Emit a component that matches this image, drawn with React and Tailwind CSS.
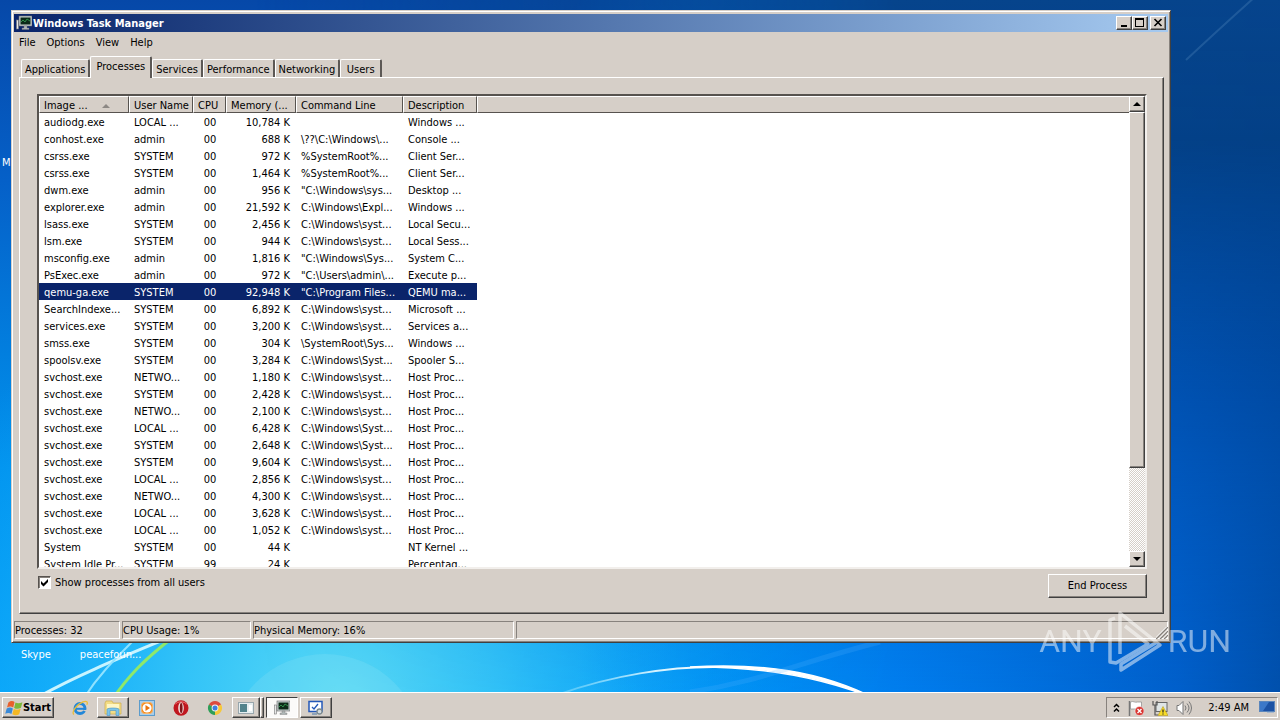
import { useState } from "react";
import clsx from "clsx";

const processes = [
  ["audiodg.exe", "LOCAL ...", "00", "10,784 K", "", "Windows ..."],
  ["conhost.exe", "admin", "00", "688 K", "\\??\\C:\\Windows\\...", "Console ..."],
  ["csrss.exe", "SYSTEM", "00", "972 K", "%SystemRoot%...", "Client Ser..."],
  ["csrss.exe", "SYSTEM", "00", "1,464 K", "%SystemRoot%...", "Client Ser..."],
  ["dwm.exe", "admin", "00", "956 K", '"C:\\Windows\\sys...', "Desktop ..."],
  ["explorer.exe", "admin", "00", "21,592 K", "C:\\Windows\\Expl...", "Windows ..."],
  ["lsass.exe", "SYSTEM", "00", "2,456 K", "C:\\Windows\\syst...", "Local Secu..."],
  ["lsm.exe", "SYSTEM", "00", "944 K", "C:\\Windows\\syst...", "Local Sess..."],
  ["msconfig.exe", "admin", "00", "1,816 K", '"C:\\Windows\\Sys...', "System C..."],
  ["PsExec.exe", "admin", "00", "972 K", '"C:\\Users\\admin\\...', "Execute p..."],
  ["qemu-ga.exe", "SYSTEM", "00", "92,948 K", '"C:\\Program Files...', "QEMU ma..."],
  ["SearchIndexe...", "SYSTEM", "00", "6,892 K", "C:\\Windows\\syst...", "Microsoft ..."],
  ["services.exe", "SYSTEM", "00", "3,200 K", "C:\\Windows\\syst...", "Services a..."],
  ["smss.exe", "SYSTEM", "00", "304 K", "\\SystemRoot\\Sys...", "Windows ..."],
  ["spoolsv.exe", "SYSTEM", "00", "3,284 K", "C:\\Windows\\Syst...", "Spooler S..."],
  ["svchost.exe", "NETWO...", "00", "1,180 K", "C:\\Windows\\syst...", "Host Proc..."],
  ["svchost.exe", "SYSTEM", "00", "2,428 K", "C:\\Windows\\syst...", "Host Proc..."],
  ["svchost.exe", "NETWO...", "00", "2,100 K", "C:\\Windows\\syst...", "Host Proc..."],
  ["svchost.exe", "LOCAL ...", "00", "6,428 K", "C:\\Windows\\Syst...", "Host Proc..."],
  ["svchost.exe", "SYSTEM", "00", "2,648 K", "C:\\Windows\\Syst...", "Host Proc..."],
  ["svchost.exe", "SYSTEM", "00", "9,604 K", "C:\\Windows\\syst...", "Host Proc..."],
  ["svchost.exe", "LOCAL ...", "00", "2,856 K", "C:\\Windows\\syst...", "Host Proc..."],
  ["svchost.exe", "NETWO...", "00", "4,300 K", "C:\\Windows\\syst...", "Host Proc..."],
  ["svchost.exe", "LOCAL ...", "00", "3,628 K", "C:\\Windows\\syst...", "Host Proc..."],
  ["svchost.exe", "LOCAL ...", "00", "1,052 K", "C:\\Windows\\syst...", "Host Proc..."],
  ["System", "SYSTEM", "00", "44 K", "", "NT Kernel ..."],
  ["System Idle Pr...", "SYSTEM", "99", "24 K", "", "Percentag..."],
];

const tabs = ["Applications", "Processes", "Services", "Performance", "Networking", "Users"];

const raised =
  "bg-[#d6cfc8] border border-t-white border-l-white border-r-[#404040] border-b-[#404040] shadow-[inset_-1px_-1px_0_#87827d]";

function Wallpaper() {
  return (
    <svg
      className="absolute inset-0 w-full h-full"
      viewBox="0 0 1280 720"
      preserveAspectRatio="none"
      aria-hidden="true"
    >
      <defs>
        <linearGradient id="sky" x1="0" y1="0" x2="0" y2="1">
          <stop offset="0" stopColor="#0648a8" />
          <stop offset="0.25" stopColor="#0560c8" />
          <stop offset="0.65" stopColor="#0093ee" />
          <stop offset="1" stopColor="#00a4fa" />
        </linearGradient>
        <radialGradient id="glow" gradientUnits="userSpaceOnUse" cx="340" cy="700" r="460">
          <stop offset="0" stopColor="#5cdcf5" />
          <stop offset="0.35" stopColor="#3ac8f8" stopOpacity="0.85" />
          <stop offset="1" stopColor="#10a4fc" stopOpacity="0" />
        </radialGradient>
        <linearGradient id="shade" x1="0" y1="0" x2="1" y2="0">
          <stop offset="0.45" stopColor="#0088f8" stopOpacity="0" />
          <stop offset="0.7" stopColor="#007cf0" stopOpacity="0.9" />
          <stop offset="0.92" stopColor="#0060cc" />
          <stop offset="1" stopColor="#0050ac" />
        </linearGradient>
        <linearGradient id="night" x1="0" y1="0" x2="0" y2="1">
          <stop offset="0" stopColor="#06448c" />
          <stop offset="0.2" stopColor="#033f84" stopOpacity="0.95" />
          <stop offset="0.55" stopColor="#0048a0" stopOpacity="0.6" />
          <stop offset="1" stopColor="#0058c0" stopOpacity="0" />
        </linearGradient>
        <linearGradient id="nightFade" x1="0" y1="0" x2="1" y2="0">
          <stop offset="0.2" stopColor="#000" />
          <stop offset="0.7" stopColor="#fff" />
        </linearGradient>
        <mask id="nightMask">
          <rect width="1280" height="720" fill="url(#nightFade)" />
        </mask>
        <linearGradient id="arc" x1="0" y1="0" x2="1" y2="0">
          <stop offset="0" stopColor="#6fd4fb" stopOpacity="0.6" />
          <stop offset="0.6" stopColor="#d4f2ff" />
          <stop offset="1" stopColor="#ffffff" />
        </linearGradient>
      </defs>
      <rect width="1280" height="720" fill="url(#sky)" />
      <rect width="1280" height="720" fill="url(#glow)" />
      <rect width="1280" height="720" fill="url(#shade)" />
      <rect width="1280" height="720" fill="url(#night)" mask="url(#nightMask)" />
      <path d="M1186 60Q1218 30 1256 -4" stroke="#5a8ec0" strokeOpacity="0.3" strokeWidth="2" fill="none" />
      <circle cx="325" cy="752" r="98" fill="#9be8f6" fillOpacity="0.2" />
      <path d="M40 696C80 674 120 658 168 638" stroke="#c8f4ff" strokeWidth="3" fill="none" />
      <path d="M84 698C98 676 112 662 134 640" stroke="#8fe2ff" strokeWidth="2" fill="none" />
      <path d="M112 700C128 676 144 660 172 638" stroke="#8fe86a" strokeWidth="3" fill="none" />
      <path d="M560 694C610 676 670 666 720 667" stroke="url(#arc)" strokeWidth="2" fill="none" />
      <path d="M690 667C760 663 820 670 878 700C820 676 760 666 690 667Z" fill="#fff" stroke="#fff" strokeWidth="1.5" />
      <path d="M690 692C760 682 800 662 880 642" stroke="#58b4ff" strokeOpacity="0.2" strokeWidth="5" fill="none" />
    </svg>
  );
}

function MonitorIcon({ className }) {
  return (
    <svg className={className} viewBox="0 0 16 16" aria-hidden="true">
      <rect x="0.5" y="5" width="2" height="9" fill="#e8e8e8" stroke="#777" strokeWidth="0.6" />
      <rect x="3" y="1" width="13" height="10" fill="#c9d2d2" stroke="#666" strokeWidth="0.6" />
      <rect x="4.5" y="2.5" width="10" height="7" fill="#0c2a18" />
      <path d="M5 7l2-2 2 2 2-3 3 2" stroke="#2f8e4a" fill="none" />
      <path d="M8 11h3v2h2v1.5H6V13h2z" fill="#aeb6b6" stroke="#777" strokeWidth="0.4" />
    </svg>
  );
}

function TitleBar() {
  return (
    <header className="h-[18px] flex items-center pl-0.5 pr-0.5 bg-gradient-to-r from-[#0a246a] to-[#a6caf0]">
      <MonitorIcon className="w-4 h-4" />
      <h1 className="grow pl-px pt-0.5 text-white font-bold">Windows Task Manager</h1>
      <button aria-label="Minimize" className={`${raised} w-4 h-3.5`}>
        <svg viewBox="0 0 14 12" className="w-3.5 h-3">
          <path d="M4 8h6v2H4z" />
        </svg>
      </button>
      <button aria-label="Maximize" className={`${raised} w-4 h-3.5`}>
        <svg viewBox="0 0 14 12" className="w-3.5 h-3">
          <path d="M2 1h9v9H2zM3 3v6h7V3z" fillRule="evenodd" />
        </svg>
      </button>
      <button aria-label="Close" className={`${raised} w-4 h-3.5 ml-0.5`}>
        <svg viewBox="0 0 14 12" className="w-3.5 h-3">
          <path d="M3.5 2l7 7M10.5 2l-7 7" stroke="#000" strokeWidth="1.6" />
        </svg>
      </button>
    </header>
  );
}

function Tabs({ active, onSelect }) {
  return (
    <div role="tablist" className="flex items-end pl-0.5 h-[21px]">
      {tabs.map((tab) => (
        <button
          key={tab}
          role="tab"
          aria-selected={tab === active}
          onClick={() => onSelect(tab)}
          className={clsx(
            "min-w-[42px] border-t border-l border-t-white border-l-white border-r-2 border-r-[#5c5855] rounded-t-[2px] whitespace-nowrap",
            tab === active
              ? "relative h-[22px] -mb-px px-[5px] bg-[#d6cfc8]"
              : "h-[18px] px-[3px] pt-[3px]"
          )}
        >
          {tab}
        </button>
      ))}
    </div>
  );
}

const th =
  "h-[17px] p-0 pl-1 pt-[3px] leading-3 font-normal text-left border-t border-l border-t-white border-l-white border-r border-b border-r-[#57534f] border-b-[#57534f] whitespace-nowrap overflow-hidden";
const td = "h-[17px] p-0 pl-[5px] pt-[3px] whitespace-nowrap overflow-hidden";

function ProcessTable({ selected, onSelect }) {
  return (
    <table className="w-full table-fixed border-separate border-spacing-0">
      <colgroup>
        <col className="w-[90px]" />
        <col className="w-16" />
        <col className="w-[33px]" />
        <col className="w-[70px]" />
        <col className="w-[107px]" />
        <col className="w-[74px]" />
        <col />
      </colgroup>
      <thead className="bg-[#d6cfc8]">
        <tr>
          <th className={th}>
            <span className="flex items-center">
              Image ...
              <svg viewBox="0 0 8 4" className="w-2 h-1 ml-3.5" aria-hidden="true">
                <path d="M0 4l4-4 4 4z" fill="#8c8884" />
              </svg>
            </span>
          </th>
          <th className={th}>User Name</th>
          <th className={th}>CPU</th>
          <th className={th}>Memory (...</th>
          <th className={th}>Command Line</th>
          <th className={th}>Description</th>
          <td className="border-t border-l border-white border-b border-b-[#57534f]" />
        </tr>
      </thead>
      <tbody>
        {processes.map((row, index) => (
          <tr key={index} onClick={() => onSelect(index)}>
            {row.map((cell, i) => (
              <td
                key={i}
                className={clsx(
                  td,
                  i === 2 && "text-center pr-1",
                  i === 3 && "text-right pr-1.5",
                  index === selected && "bg-[#0a246a] text-white"
                )}
              >
                {cell}
              </td>
            ))}
          </tr>
        ))}
      </tbody>
    </table>
  );
}

function Scrollbar() {
  return (
    <div className="w-4 shrink-0 flex flex-col bg-[conic-gradient(#fff_25%,#d6cfc8_0_50%,#fff_0_75%,#d6cfc8_0)] bg-[length:2px_2px]">
      <button aria-label="Scroll up" className={`${raised} h-4 flex items-center justify-center`}>
        <svg viewBox="0 0 8 4" className="w-2 h-1">
          <path d="M0 4l4-4 4 4z" />
        </svg>
      </button>
      <div className={`${raised} h-[356px]`} />
      <div className="grow" />
      <button aria-label="Scroll down" className={`${raised} h-4 flex items-center justify-center`}>
        <svg viewBox="0 0 8 4" className="w-2 h-1">
          <path d="M0 0l4 4 4-4z" />
        </svg>
      </button>
    </div>
  );
}

function StatusBar() {
  const cell =
    "h-[18px] pt-0.5 flex items-center whitespace-nowrap border border-t-[#87827d] border-l-[#87827d] border-r-white border-b-white";
  return (
    <footer className="flex gap-0.5 mt-[7px] relative">
      <div className={`${cell} w-[106px]`}>Processes: 32</div>
      <div className={`${cell} w-[129px]`}>CPU Usage: 1%</div>
      <div className={`${cell} w-[261px]`}>Physical Memory: 16%</div>
      <div className={`${cell} grow`} />
      <svg viewBox="0 0 12 12" className="absolute right-0 bottom-0 w-3 h-3" aria-hidden="true">
        <path d="M0 12L12 0M4 12l8-8M8 12l4-4" stroke="#87827d" strokeWidth="1.5" />
        <path d="M-1.5 12L12-1.5M2.5 12l9.5-9.5M6.5 12l5.5-5.5" stroke="#fff" />
      </svg>
    </footer>
  );
}

function Watermark() {
  return (
    <div className="absolute right-[49px] bottom-12 flex items-center gap-1.5 opacity-50 text-white pointer-events-none">
      <span className="text-[32px] leading-none font-[Roboto,sans-serif]">ANY</span>
      <svg viewBox="0 0 54 62" className="w-[54px] h-[62px]" fill="none" stroke="currentColor" strokeWidth="3.5" strokeLinejoin="round">
        <path d="M12 44V3l40 32-39 25v-6l36-22" />
        <path d="M7 8L2 10v42l6 1 32-19-23-18" />
      </svg>
      <span className="text-[32px] leading-none font-[Roboto,sans-serif]">RUN</span>
    </div>
  );
}

function StartFlag() {
  return (
    <svg viewBox="0 0 16 16" className="w-[18px] h-[18px]" aria-hidden="true">
      <path d="M3 3c2-1.5 4-1.5 5.5-.3L7.3 7.5C5.500 6.3 3.700 6.500 1.800 7.500z" fill="#e8602c" />
      <path d="M9.3 3.2c2 1 4 .8 6.200-.4l-1.300 5c-2 1.100-4 1.200-6.100.1z" fill="#7cb83a" />
      <path d="M1.500 8.400c2-1.100 3.800-1.100 5.500 0l-1.300 4.900C4 12.200 2 12.300.2 13.200z" fill="#3a8ad8" />
      <path d="M7.800 8.800c2 1 4 .9 6.100-.2l-1.300 4.900c-2 1.200-4 1.200-6.100.1z" fill="#f4b824" />
    </svg>
  );
}

function ExplorerE() {
  return (
    <svg viewBox="0 0 16 16" className="w-4 h-4" fill="none" aria-hidden="true">
      <circle cx="8" cy="8.5" r="5" stroke="#2387d8" strokeWidth="3" />
      <path d="M4 8.800h9.500" stroke="#2387d8" strokeWidth="2" />
      <path d="M10 10h5v2z" fill="#d6cfc8" />
      <path d="M2 14.500C-1 13 4 4.500 11 1.800c4-1.400 5 .4 3.800 3" stroke="#e9bd38" strokeWidth="1.3" />
    </svg>
  );
}

function FolderIcon() {
  return (
    <svg viewBox="0 0 18 16" className="w-[18px] h-4" aria-hidden="true">
      <path d="M1 3l1-2h6l1 2h8v11H1z" fill="#f2dc86" stroke="#caa63c" strokeWidth="0.6" />
      <path d="M3 4h12v4H3z" fill="#fff6c4" />
      <path d="M3 15.500V9.500c0-2 12-2 12 0v6h-3v-5H6v5z" fill="#7cc4ea" stroke="#4a94c4" strokeWidth="0.6" />
    </svg>
  );
}

function MediaIcon() {
  return (
    <svg viewBox="0 0 16 16" className="w-4 h-4" aria-hidden="true">
      <rect x="0.5" y="0.5" width="15" height="15" fill="#a8cdea" stroke="#5c9ccc" />
      <rect x="2.5" y="2.5" width="11" height="11" rx="3" fill="#f48a1c" stroke="#f8b468" />
      <circle cx="8" cy="8" r="4.6" fill="#fff" />
      <path d="M6.500 5l4.500 3-4.500 3z" fill="#e8720c" />
    </svg>
  );
}

function OperaIcon() {
  return (
    <svg viewBox="0 0 16 16" className="w-4 h-4" aria-hidden="true">
      <ellipse cx="8" cy="8" rx="7.5" ry="7.8" fill="#c01820" />
      <path d="M2 4.500C4 1 12 1 14 4.500" stroke="#ea7070" fill="none" />
      <ellipse cx="8" cy="8" rx="2.8" ry="5.8" fill="#f2e4e2" />
      <ellipse cx="8.2" cy="8" rx="1.4" ry="5" fill="#80151a" />
    </svg>
  );
}

function ChromeIcon() {
  return (
    <svg viewBox="0 0 16 16" className="w-4 h-4" aria-hidden="true">
      <path d="M8 8L1.900 4.500A7 7 0 0114.100 4.500z" fill="#dd4b3e" />
      <path d="M8 8l6.100-3.500A7 7 0 018 15z" fill="#f6c83a" />
      <path d="M8 8v7A7 7 0 011.900 4.500z" fill="#2f9e58" />
      <circle cx="8" cy="8" r="3.4" fill="#f2f2f2" />
      <circle cx="8" cy="8" r="2.5" fill="#3f7fe0" />
    </svg>
  );
}

function ConsoleIcon() {
  return (
    <svg viewBox="0 0 16 12" className="w-4 h-3" aria-hidden="true">
      <rect x="0.5" y="0.5" width="15" height="11" fill="#e6eef0" stroke="#98a6ac" />
      <rect x="2" y="2" width="7" height="8" fill="#52838c" />
      <path d="M11 3h3v6h-3z" fill="#fff" />
    </svg>
  );
}

function ConfigIcon() {
  return (
    <svg viewBox="0 0 16 16" className="w-4 h-4" aria-hidden="true">
      <rect x="1" y="1.5" width="13" height="10" fill="#fff" stroke="#2458b8" strokeWidth="1.5" />
      <path d="M4 7l2 2 4-5" stroke="#2458b8" fill="none" strokeWidth="1.3" />
      <path d="M4 14h5" stroke="#4878a8" />
      <circle cx="11.5" cy="11.5" r="2.5" fill="#d4dce0" stroke="#7c8a90" strokeWidth="1.3" />
    </svg>
  );
}

function Tray() {
  return (
    <div className="flex items-center h-[21px] w-[172px] pl-1.5 pr-0.5 gap-2 border border-t-[#87827d] border-l-[#87827d] border-r-white border-b-white">
      <button aria-label="Show hidden icons">
        <svg viewBox="0 0 7 10" className="w-[7px] h-2.5" fill="none" stroke="#000" strokeWidth="1.5">
          <path d="M1 4l2.500-2.500L6 4M1 8.500L3.500 6 6 8.500" />
        </svg>
      </button>
      <svg viewBox="0 0 16 16" className="w-4 h-4" aria-label="Action Center">
        <path d="M1.500 1v15" stroke="#777" strokeWidth="1.5" />
        <path d="M2.500 2c3-1.500 4 1 7 0h4v7H2.500z" fill="#fff" stroke="#888" strokeWidth="0.7" />
        <circle cx="11.5" cy="11" r="4.5" fill="#d83430" stroke="#fff" strokeWidth="0.5" />
        <path d="M9.500 9l4 4M13.500 9l-4 4" stroke="#fff" strokeWidth="1.4" />
      </svg>
      <svg viewBox="0 0 16 16" className="w-4 h-4" aria-label="Network">
        <rect x="4" y="2.5" width="11" height="9" fill="#dfe5e6" stroke="#666" />
        <path d="M1 1v4h4V1M3 5v10h3" fill="none" stroke="#555" strokeWidth="1.2" />
        <path d="M11 6.500l5 9H6z" fill="#f8dc28" stroke="#a88c10" strokeWidth="0.5" />
        <path d="M11 9.500v3M11 13.500v1" stroke="#222" strokeWidth="1.2" />
      </svg>
      <svg viewBox="0 0 16 16" className="w-4 h-4" aria-label="Volume" fill="none" stroke="#777">
        <path d="M1 5.500h2l4-4v13l-4-4H1z" fill="#fff" />
        <path d="M9 5.500q2 2.500 0 5M11 3.500q4 4.500 0 9M13 1.500q5 6.500 0 13" />
      </svg>
      <time className="grow text-right pr-0.5">2:49 AM</time>
      <button aria-label="Show desktop">
        <svg viewBox="0 0 16 13" className="w-4 h-[13px]">
          <rect x="0.5" y="0.5" width="15" height="10" fill="#1c52a4" stroke="#5b86bc" />
          <path d="M1 1h9L4 10H1z" fill="#3c78c8" />
          <path d="M8 11.500h7" stroke="#a8b8cc" />
        </svg>
      </button>
    </div>
  );
}

function Taskbar() {
  const slot = "h-[21px] flex items-center justify-center";
  return (
    <nav className="relative h-7 flex items-center bg-[#d6cfc8] border-t border-white pl-0.5 pr-0.5 pt-0.5">
      <button className={`${raised} ${slot} w-[52px] font-bold`}>
        <StartFlag />
        Start
      </button>
      <button aria-label="Internet Explorer" className={`${slot} w-[34px] ml-[9px]`}>
        <ExplorerE />
      </button>
      <button aria-label="Windows Explorer" className={`${raised} ${slot} w-8`}>
        <FolderIcon />
      </button>
      <button aria-label="Media Player" className={`${slot} w-[34px] ml-px`}>
        <MediaIcon />
      </button>
      <button aria-label="Opera" className={`${slot} w-[34px]`}>
        <OperaIcon />
      </button>
      <button aria-label="Chrome" className={`${slot} w-[34px]`}>
        <ChromeIcon />
      </button>
      <button aria-label="Console" className={`${raised} ${slot} w-7`}>
        <ConsoleIcon />
      </button>
      <div className={`${raised} h-[21px] w-1`} />
      <button
        aria-label="Windows Task Manager"
        className={`${slot} w-8 ml-0.5 bg-[#fbfaf9] border border-t-[#404040] border-l-[#404040] border-r-white border-b-white`}
      >
        <MonitorIcon className="w-4 h-4" />
      </button>
      <button aria-label="System Configuration" className={`${raised} ${slot} w-8 ml-0.5`}>
        <ConfigIcon />
      </button>
      <div className="grow" />
      <Tray />
    </nav>
  );
}

export default function App() {
  const [tab, setTab] = useState("Processes");
  const [selected, setSelected] = useState(10);
  const [allUsers, setAllUsers] = useState(true);

  return (
    <div className="relative h-screen flex flex-col overflow-hidden bg-[#0060c8] text-black text-[11px] leading-[14px] font-['DejaVu_Sans_Condensed',Tahoma,sans-serif]">
      <Wallpaper />
      <span className="absolute left-0.5 top-[156px] text-white">M</span>
      <main className="relative grow min-h-0 flex flex-col mt-2.5 ml-[11px] mr-[109px] p-px bg-[#d6cfc8] border border-[#d6cfc8] border-r-[#404040] border-b-[#404040] shadow-[inset_1px_1px_0_#fff,inset_-1px_-1px_0_#87827d]">
        <div className="grow min-h-0 flex flex-col pt-0.5 pb-0.5 px-px">
          <TitleBar />
          <div className="flex items-center h-[21px] pt-0.5 pl-[5px] gap-[11px]">
            <button>File</button>
            <button>Options</button>
            <button>View</button>
            <button>Help</button>
          </div>
          <div className="grow min-h-0 flex flex-col mt-[3px] pl-[5px] pr-1">
            <Tabs active={tab} onSelect={setTab} />
            <section className="grow min-h-0 flex flex-col pt-4 pl-[17px] pr-4 pb-[15px] border border-t-white border-l-white border-r-[#404040] border-b-[#404040] shadow-[inset_-1px_-1px_0_#87827d]">
              <div className="grow min-h-0 flex bg-white border-2 border-t-[#57534f] border-l-[#57534f] border-r-[#f2efec] border-b-[#f2efec]">
                <div className="grow min-w-0 overflow-hidden">
                  <ProcessTable selected={selected} onSelect={setSelected} />
                </div>
                <Scrollbar />
              </div>
              <div className="flex items-start justify-between pt-[5px]">
                <label className="flex items-center gap-1 pt-0.5 pl-px">
                  <span className="relative grid w-[13px] h-[13px]">
                    <input
                      type="checkbox"
                      checked={allUsers}
                      onChange={(e) => setAllUsers(e.target.checked)}
                      className="appearance-none w-[13px] h-[13px] bg-white border border-t-[#57534f] border-l-[#57534f] border-r-white border-b-white shadow-[inset_1px_1px_0_#87827d]"
                    />
                    {allUsers && (
                      <svg viewBox="0 0 13 13" className="absolute inset-0 pointer-events-none" aria-hidden="true">
                        <path d="M3 5l2.500 2.500L10 3v3L5.500 10.500 3 8z" />
                      </svg>
                    )}
                  </span>
                  Show processes from all users
                </label>
                <button className={`${raised} w-[99px] h-6`}>End Process</button>
              </div>
            </section>
          </div>
          <StatusBar />
        </div>
      </main>
      <div className="relative h-[50px] flex pt-[5px] pl-[21px] gap-[29px] text-white">
        <span>Skype</span>
        <span>peacefoun...</span>
      </div>
      <Taskbar />
      <Watermark />
    </div>
  );
}
